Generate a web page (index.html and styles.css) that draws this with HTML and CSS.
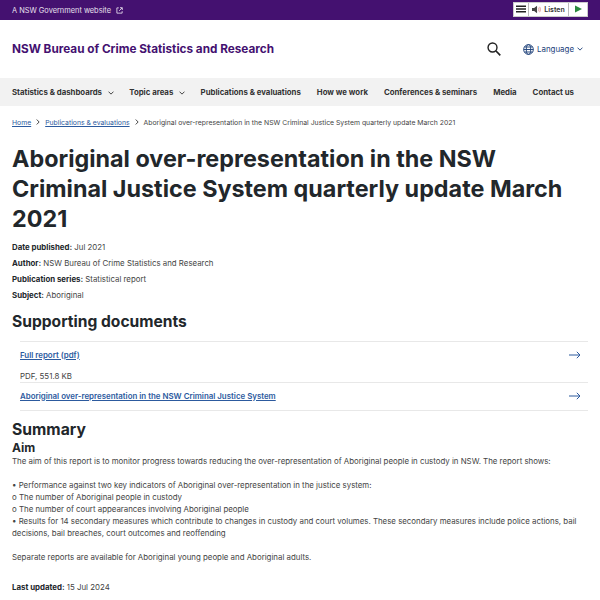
FILE: index.html
```html
<!DOCTYPE html>
<html lang="en">
<head>
  <meta charset="UTF-8">
  <meta name="viewport" content="width=device-width, initial-scale=1.0">
  <title>Aboriginal over-representation in the NSW Criminal Justice System quarterly update March 2021</title>
  <link rel="stylesheet" href="styles.css">
</head>
<body>
  <div class="masthead">
    <a class="masthead-link" href="#">A NSW Government website
      <svg class="external" viewBox="0 0 8 8" width="7" height="7"><path d="M3.2 1H1v6h6V4.8M4.6.8h2.600v2.600M7 1 3.6 4.4" fill="none" stroke="#e6dcec" stroke-width="1"/></svg>
    </a>
    <div class="listen">
      <span class="listen-menu"><svg viewBox="0 0 10 8" width="10" height="8"><path d="M0 .5h10v1.600H0zM0 3.200h10v1.600H0zM0 5.900h10v1.600H0z" fill="#222"/></svg></span>
      <span class="listen-label">
        <svg viewBox="0 0 10 10" width="9" height="9"><path d="M0 3.200h2.400L5.600.8v8.400L2.400 6.800H0z" fill="#444"/><path d="M7 3c.8 1.200.8 2.800 0 4M8.400 2c1.200 1.800 1.200 4.200 0 6" fill="none" stroke="#d88" stroke-width=".9"/></svg>
        Listen
      </span>
      <span class="listen-play"><svg viewBox="0 0 8 8" width="7" height="8"><path d="M0 0l8 4-8 4z" fill="#2a8a3e"/></svg></span>
    </div>
  </div>

  <header class="site-header">
    <a class="site-name" href="#">NSW Bureau of Crime Statistics and Research</a>
    <div class="header-tools">
      <svg class="search" viewBox="0 0 16 16" width="14" height="14"><circle cx="6.300" cy="6.300" r="5.100" fill="none" stroke="#222" stroke-width="1.600"/><path d="M10 10l5.200 5.200" stroke="#222" stroke-width="1.900"/></svg>
      <a class="language" href="#">
        <svg viewBox="0 0 12 12" width="11" height="11"><g fill="none" stroke="#1d3f78" stroke-width="1"><circle cx="6" cy="6" r="5.300"/><ellipse cx="6" cy="6" rx="2.400" ry="5.300"/><path d="M.7 6h10.600M1.400 3.300h9.200M1.400 8.700h9.200"/></g></svg>
        Language
        <svg class="chevron" viewBox="0 0 8 5" width="6" height="4"><path d="M.7.7 4 4l3.300-3.300" fill="none" stroke="#1d3f78" stroke-width="1.200"/></svg>
      </a>
    </div>
  </header>

  <nav class="main-nav">
    <a href="#">Statistics &amp; dashboards <svg class="chevron" viewBox="0 0 8 5" width="6" height="4"><path d="M.7.7 4 4l3.300-3.300" fill="none" stroke="#333" stroke-width="1.200"/></svg></a>
    <a href="#">Topic areas <svg class="chevron" viewBox="0 0 8 5" width="6" height="4"><path d="M.7.7 4 4l3.300-3.300" fill="none" stroke="#333" stroke-width="1.200"/></svg></a>
    <a href="#">Publications &amp; evaluations</a>
    <a href="#">How we work</a>
    <a href="#">Conferences &amp; seminars</a>
    <a href="#">Media</a>
    <a href="#">Contact us</a>
  </nav>

  <main class="content">
    <div class="breadcrumb">
      <a href="#">Home</a>
      <svg viewBox="0 0 5 8" width="4" height="6"><path d="M.8.7 4 4 .8 7.300" fill="none" stroke="#333" stroke-width="1.200"/></svg>
      <a href="#">Publications &amp; evaluations</a>
      <svg viewBox="0 0 5 8" width="4" height="6"><path d="M.8.7 4 4 .8 7.300" fill="none" stroke="#333" stroke-width="1.200"/></svg>
      <span>Aboriginal over-representation in the NSW Criminal Justice System quarterly update March 2021</span>
    </div>

    <h1>Aboriginal over-representation in the NSW Criminal Justice System quarterly update March 2021</h1>

    <ul class="meta">
      <li><b>Date published:</b> Jul 2021</li>
      <li><b>Author:</b> NSW Bureau of Crime Statistics and Research</li>
      <li><b>Publication series:</b> Statistical report</li>
      <li><b>Subject:</b> Aboriginal</li>
    </ul>

    <h2>Supporting documents</h2>

    <div class="documents">
      <div class="doc">
        <a class="doc-row" href="#">
          <span class="doc-title">Full report (pdf)</span>
          <svg viewBox="0 0 12 8" width="12" height="8"><path d="M0 4h11M7.800 .8 11 4 7.800 7.200" fill="none" stroke="#2c5a9e" stroke-width="1"/></svg>
        </a>
        <p class="doc-info">PDF, 551.8 KB</p>
      </div>
      <div class="doc">
        <a class="doc-row" href="#">
          <span class="doc-title">Aboriginal over-representation in the NSW Criminal Justice System</span>
          <svg viewBox="0 0 12 8" width="12" height="8"><path d="M0 4h11M7.800 .8 11 4 7.800 7.200" fill="none" stroke="#2c5a9e" stroke-width="1"/></svg>
        </a>
      </div>
    </div>

    <h3>Summary</h3>
    <h4>Aim</h4>
    <p class="body-text">The aim of this report is to monitor progress towards reducing the over-representation of Aboriginal people in custody in NSW. The report shows:</p>
    <p class="body-text">• Performance against two key indicators of Aboriginal over-representation in the justice system:<br>
    o The number of Aboriginal people in custody<br>
    o The number of court appearances involving Aboriginal people<br>
    • Results for 14 secondary measures which contribute to changes in custody and court volumes. These secondary measures include police actions, bail decisions, bail breaches, court outcomes and reoffending</p>
    <p class="body-text">Separate reports are available for Aboriginal young people and Aboriginal adults.</p>

    <p class="updated"><b>Last updated:</b> 15 Jul 2024</p>
  </main>
</body>
</html>
```

FILE: styles.css
```css
/* General Styles */
body {
  font-family: 'Inter', 'Liberation Sans', sans-serif;
  margin: 0;
  padding: 0;
  color: #22272b;
  background: #fff;
  height: 600px;
  overflow: hidden;
}

a {
  color: inherit;
  text-decoration: none;
}

/* Masthead */
.masthead {
  background: #441170;
  height: 20px;
  padding: 0 12px;
  display: flex;
  justify-content: space-between;
  align-items: center;
}

.masthead-link {
  color: #e8e0ee;
  font-size: 7.4px;
  display: flex;
  align-items: center;
  gap: 5px;
}

.listen {
  display: flex;
  height: 13px;
  margin-top: -2px;
  background: #fff;
  border: 1px solid #ccc;
  font-size: 7px;
  font-weight: 600;
  color: #333;
}

.listen span {
  display: flex;
  align-items: center;
  justify-content: center;
  border-left: 1px solid #bbb;
}

.listen-menu {
  width: 14px;
  border-left: none !important;
}

.listen-label {
  width: 39px;
  gap: 3px;
}

.listen-play {
  width: 18px;
}

/* Header */
.site-header {
  height: 58px;
  padding: 0 17px 0 12px;
  display: flex;
  justify-content: space-between;
  align-items: center;
}

.site-name {
  color: #441170;
  font-size: 11.75px;
  font-weight: 700;
}

.header-tools {
  display: flex;
  align-items: center;
  gap: 22px;
}

.language {
  color: #22417a;
  font-size: 7.9px;
  display: flex;
  align-items: center;
  gap: 3px;
}

/* Nav */
.main-nav {
  background: #f2f2f2;
  height: 28px;
  padding: 0 12px;
  display: flex;
  align-items: center;
  gap: 16px;
}

.main-nav a {
  font-size: 7.8px;
  font-weight: 700;
  color: #333;
  white-space: nowrap;
}

.main-nav .chevron {
  margin-left: 4px;
  margin-right: -0.5px;
}

/* Content */
.content {
  padding: 0 12px;
}

.breadcrumb {
  display: flex;
  align-items: center;
  gap: 5px;
  height: 32px;
  font-size: 6.85px;
  color: #444;
  white-space: nowrap;
}

.breadcrumb a {
  color: #2c5a9e;
  text-decoration: underline;
}

h1 {
  font-size: 23.35px;
  line-height: 30px;
  font-weight: 700;
  margin: 6px 0 5px;
}

.meta {
  list-style: none;
  margin: 0;
  padding: 0;
  font-size: 7.85px;
  line-height: 16px;
  color: #444;
}

.meta b {
  color: #22272b;
}

h2 {
  font-size: 15.6px;
  line-height: 20px;
  font-weight: 700;
  margin: 9px 0 9px;
}

.documents {
  margin-left: 8px;
  border-bottom: 1px solid #e8e8e8;
}

.doc {
  border-top: 1px solid #e8e8e8;
  padding: 0 7px 0 0;
}

.doc-row {
  display: flex;
  justify-content: space-between;
  align-items: center;
  box-sizing: border-box;
  height: 27px;
  padding-bottom: 2px;
}

.doc-title {
  color: #2c5a9e;
  font-size: 7.9px;
  font-weight: 600;
  text-decoration: underline;
}

.doc-info {
  font-size: 7.9px;
  line-height: 12px;
  margin: 0;
  padding-top: 1px;
  color: #444;
}

h3 {
  font-size: 15.7px;
  line-height: 20px;
  font-weight: 700;
  margin: 9px 0 0;
}

h4 {
  font-size: 12px;
  line-height: 15px;
  font-weight: 700;
  margin: 0;
}

.body-text {
  font-size: 7.87px;
  line-height: 12px;
  margin: 0 0 12px;
  color: #444;
}

.updated {
  font-size: 7.87px;
  line-height: 12px;
  margin: 18px 0 0;
  color: #444;
}

.updated b {
  color: #22272b;
}
```
